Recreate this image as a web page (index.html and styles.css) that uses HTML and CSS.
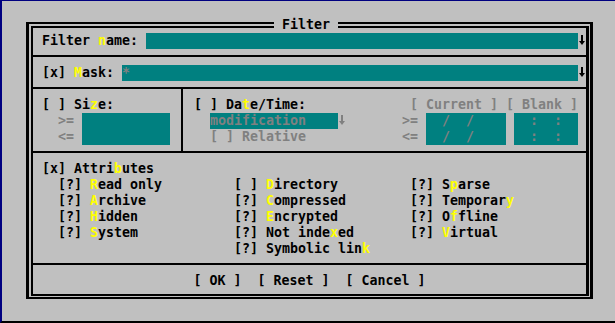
FILE: index.html
```html
<!DOCTYPE html>
<html>
<head>
  <title>Filter</title>
  <link rel="stylesheet" href="styles.css">
</head>
<body>
  <div class="screen">
    <div class="dialog">
      <div class="dialog-title">Filter</div>
      <div class="dialog-body">
        <!-- Filter name -->
        <div class="section first">
          <div class="edit-row">
            <span class="label">Filter <span class="hot">n</span>ame:</span>
            <span class="field"></span>
            <svg class="arrow" width="8" height="16" viewBox="0 0 8 16"><path d="M3 2h2v6h2l-3 4-3-4h2z" fill="#000"/></svg>
          </div>
        </div>
        <div class="sep"></div>

        <!-- Mask -->
        <div class="section">
          <div class="edit-row">
            <span class="label">[x] <span class="hot">M</span>ask:</span>
            <span class="field"><span class="dim">*</span></span>
            <svg class="arrow" width="8" height="16" viewBox="0 0 8 16"><path d="M3 2h2v6h2l-3 4-3-4h2z" fill="#000"/></svg>
          </div>
        </div>
        <div class="sep"></div>

        <!-- Size / Date -->
        <div class="range-group">
          <div class="size-box">
            <div class="caption">[ ] Si<span class="hot">z</span>e:</div>
            <div class="cmp dim r2">&gt;=</div>
            <div class="field size-field r2"></div>
            <div class="cmp dim r3">&lt;=</div>
            <div class="field size-field r3"></div>
          </div>
          <div class="date-box">
            <div class="caption">[ ] Da<span class="hot">t</span>e/Time:</div>
            <div class="quick dim">[ Current ] [ Blank ]</div>

            <div class="field combo r2">modification</div>
            <svg class="arrow combo-arrow r2" width="8" height="16" viewBox="0 0 8 16"><path d="M3 2h2v6h2l-3 4-3-4h2z" fill="#808080"/></svg>
            <div class="cmp dim r2">&gt;=</div>
            <div class="field date r2">  /  /    </div>
            <div class="field time r2">  :  :  </div>

            <div class="relative dim r3">[ ] Relative</div>
            <div class="cmp dim r3">&lt;=</div>
            <div class="field date r3">  /  /    </div>
            <div class="field time r3">  :  :  </div>
          </div>
        </div>
        <div class="sep"></div>

        <!-- Attributes -->
        <div class="section">
          <div>[x] Attri<span class="hot">b</span>utes</div>
          <div class="attr-cols">
            <div class="attr-col">
              <div>[?] <span class="hot">R</span>ead only</div>
              <div>[?] <span class="hot">A</span>rchive</div>
              <div>[?] <span class="hot">H</span>idden</div>
              <div>[?] <span class="hot">S</span>ystem</div>
            </div>
            <div class="attr-col">
              <div>[ ] <span class="hot">D</span>irectory</div>
              <div>[?] <span class="hot">C</span>ompressed</div>
              <div>[?] <span class="hot">E</span>ncrypted</div>
              <div>[?] Not inde<span class="hot">x</span>ed</div>
              <div>[?] Symbolic lin<span class="hot">k</span></div>
            </div>
            <div class="attr-col">
              <div>[?] S<span class="hot">p</span>arse</div>
              <div>[?] Temporar<span class="hot">y</span></div>
              <div>[?] O<span class="hot">f</span>fline</div>
              <div>[?] <span class="hot">V</span>irtual</div>
            </div>
          </div>
        </div>
        <div class="sep"></div>

        <!-- Buttons -->
        <div class="buttons">[ OK ]  [ Reset ]  [ Cancel ]</div>
      </div>
    </div>
  </div>
</body>
</html>
```

FILE: styles.css
```css
body {
  margin: 0;
  background: #c0c0c0;
  color: #000;
  font-family: 'DejaVu Sans Mono', monospace;
  font-size: 13.29px;
  font-weight: bold;
  line-height: 16px;
}

.screen {
  box-sizing: border-box;
  width: 615px;
  height: 323px;
  padding: 21px 0 0 24px;
  background: #c0c0c0;
  border-top: 1px solid #000080;
  border-left: 2px solid #000080;
  border-bottom: 2px solid #000;
  overflow: hidden;
}

/* Double frame */
.dialog {
  position: relative;
  box-sizing: border-box;
  width: 567px;
  height: 277px;
  padding: 2px 1px 1px 2px;
  border: solid #000;
  border-width: 2px 3px;
}

.dialog-title {
  position: absolute;
  top: -7px;
  left: 245px;
  padding: 0 8px;
  background: #c0c0c0;
}

.dialog-body {
  box-sizing: border-box;
  height: 100%;
  border: solid #000;
  border-width: 2px 3px 2px 2px;
}

.section {
  padding: 8px 0 6px 9px;
}

.section.first {
  padding-top: 5px;
}

.sep {
  height: 2px;
  background: #000;
}

.hot {
  color: #ffff00;
}

.dim {
  color: #808080;
}

.field {
  background: #008080;
  color: #808080;
  white-space: pre;
}

.arrow {
  display: block;
  width: 8px;
  height: 16px;
}

/* Edit lines */
.edit-row {
  display: flex;
  height: 16px;
}

.edit-row .label {
  margin-right: 8px;
}

.edit-row .field {
  flex: 1;
}

/* Size / Date */
.range-group {
  display: flex;
}

.size-box {
  display: grid;
  grid-template-columns: 16px 24px 88px;
  grid-template-rows: repeat(3, 16px);
  width: 139px;
  padding: 8px 0 6px 9px;
  border-right: 2px solid #000;
}

.date-box {
  display: grid;
  grid-template-columns: 16px 128px 8px 56px 24px 80px 8px 64px;
  grid-template-rows: repeat(3, 16px);
  padding: 8px 0 6px 11px;
}

.caption {
  grid-row: 1;
  grid-column: 1 / 5;
}

.size-box .caption {
  grid-column: 1 / -1;
}

.quick {
  grid-row: 1;
  grid-column: 5 / -1;
  padding-left: 8px;
  white-space: pre;
}

.r2 {
  grid-row: 2;
}

.r3 {
  grid-row: 3;
}

.size-box .cmp {
  grid-column: 2;
}

.size-field {
  grid-column: 3;
}

.date-box .cmp {
  grid-column: 5;
}

.combo {
  grid-column: 2;
}

.combo-arrow {
  grid-column: 3;
}

.relative {
  grid-column: 2 / 5;
}

.date {
  grid-column: 6;
}

.time {
  grid-column: 8;
}

/* Attributes */
.attr-cols {
  display: flex;
  margin-left: 16px;
}

.attr-col {
  width: 176px;
}

/* Buttons */
.buttons {
  padding: 8px 0 5px;
  text-align: center;
  white-space: pre;
}
```
